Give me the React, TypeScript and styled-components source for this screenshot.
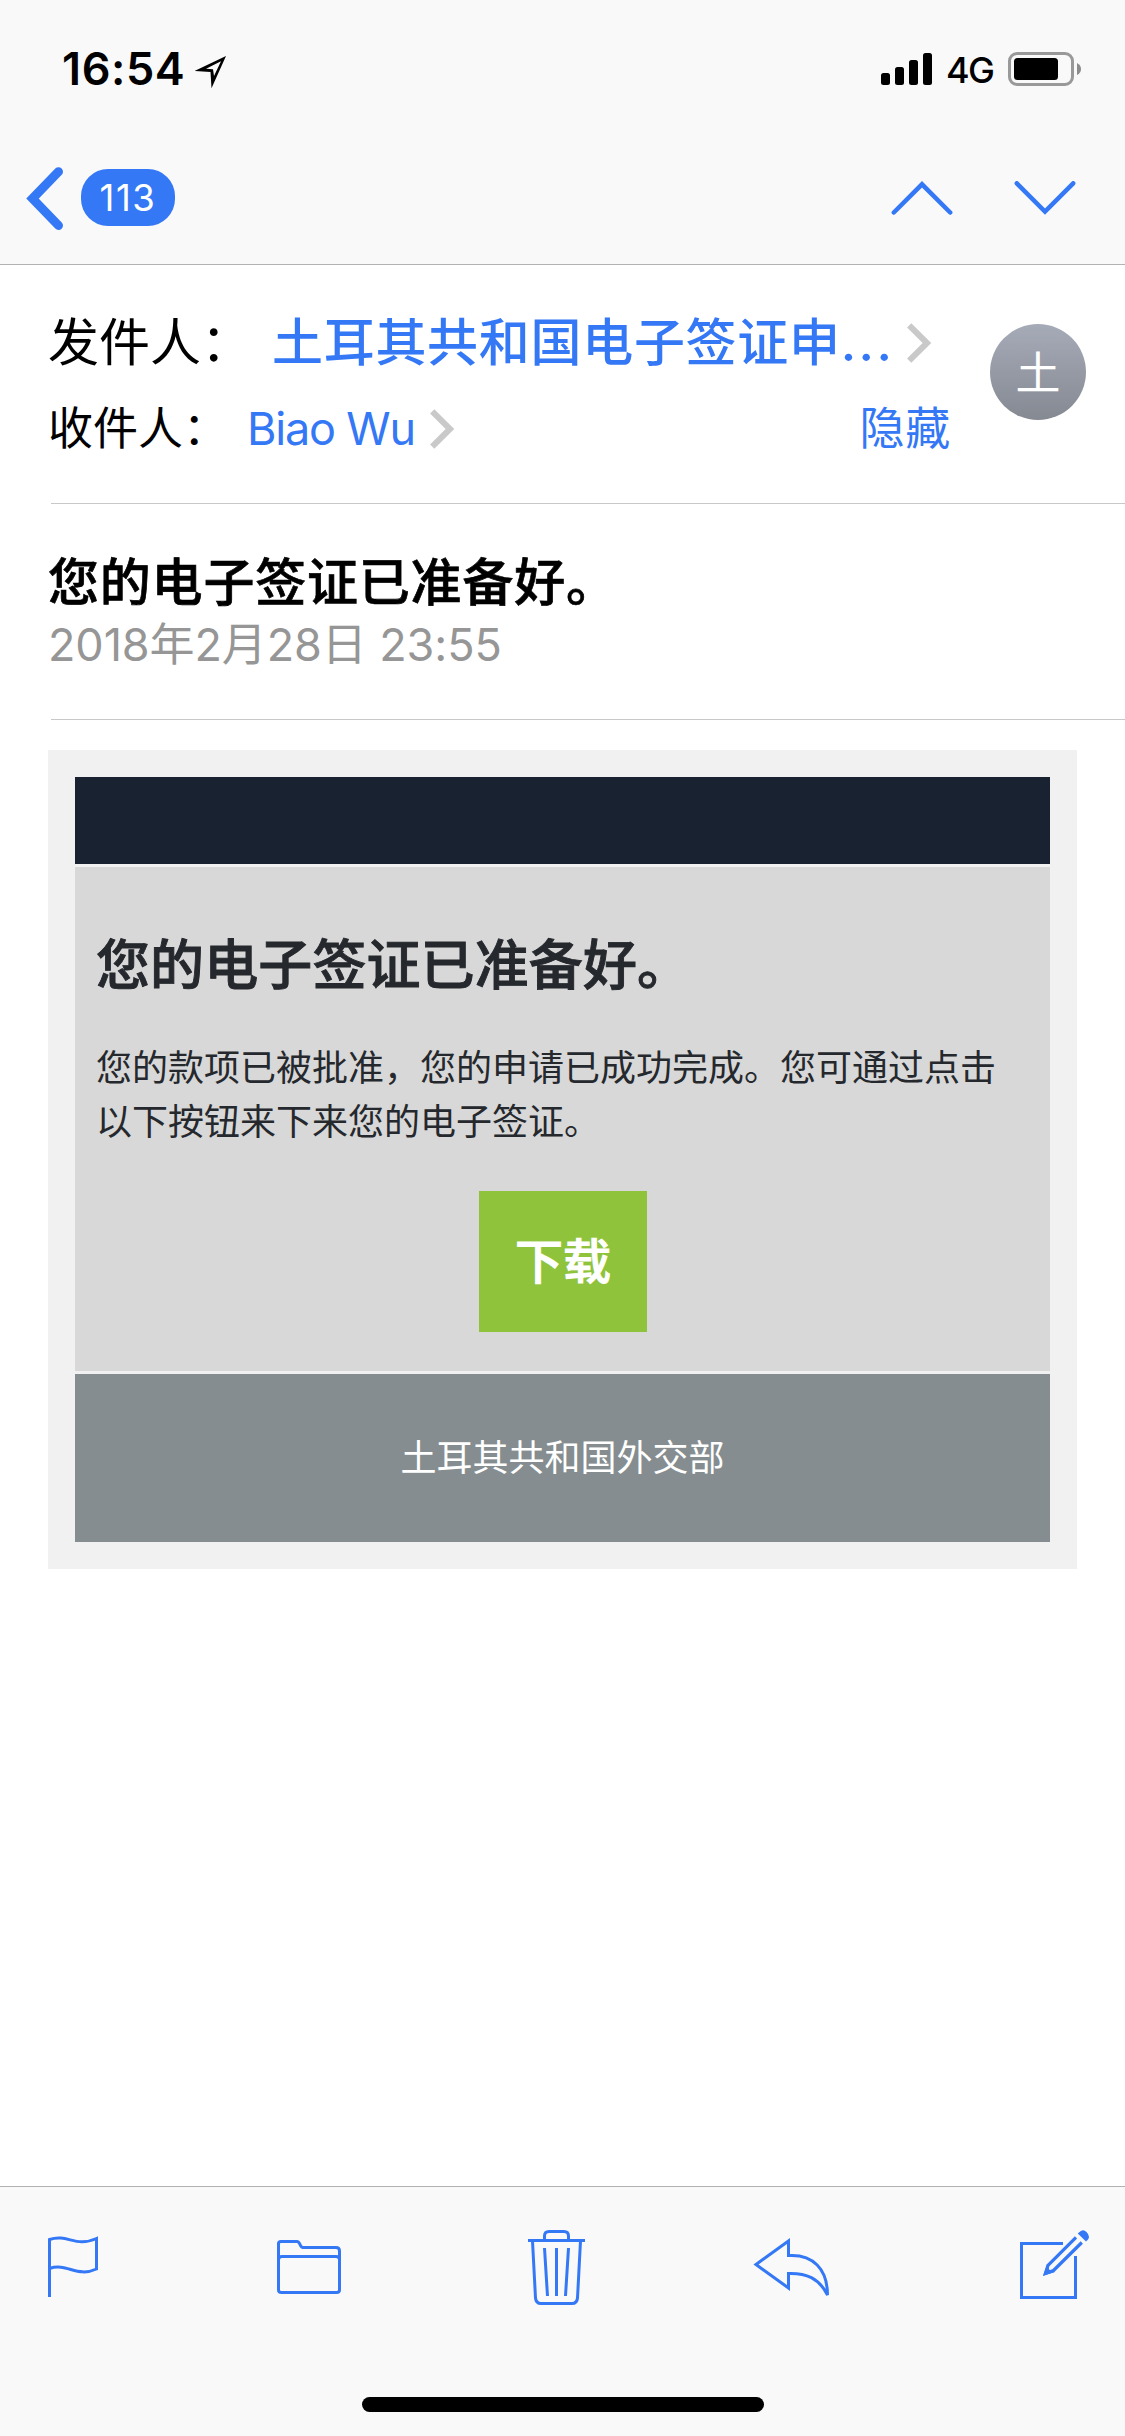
import React from "react";
import styled, { createGlobalStyle } from "styled-components";

const blue = "#3478f6";
const barFill = "#f9f9f9";
const sans = `Inter, "Noto Sans CJK SC", sans-serif`;

const GlobalStyle = createGlobalStyle`
  * { box-sizing: border-box; }
  body { margin: 0; background: #fff; }
`;

const Screen = styled.div`
  width: 1125px;
  height: 2436px;
  display: flex;
  flex-direction: column;
  background: #fff;
  font-family: ${sans};
  color: #000;
  overflow: hidden;
`;

const TopBar = styled.header`
  height: 265px;
  flex: none;
  background: ${barFill};
  border-bottom: 1px solid #b2b2b2;
`;

const StatusBar = styled.div`
  height: 132px;
  padding: 39px 44px 0 62px;
  display: flex;
  align-items: flex-start;
`;

const Clock = styled.span`
  width: 133px;
  font-size: 45px;
  line-height: 60px;
  font-weight: 600;
  letter-spacing: 0.6px;
  white-space: nowrap;
`;

const LocationIcon = styled.svg`
  margin-top: 16px;
`;

const Indicators = styled.div`
  margin-left: auto;
  display: flex;
  align-items: flex-start;
`;

const Signal = styled.div`
  display: flex;
  align-items: flex-end;
  gap: 5px;
  height: 32px;
  margin: 14px 14px 0 0;
`;

const SignalBar = styled.span<{ $height: number }>`
  width: 9px;
  height: ${(p) => p.$height}px;
  border-radius: 2.5px;
  background: #000;
`;

const Network = styled.span`
  width: 62px;
  font-size: 36px;
  line-height: 63px;
  font-weight: 450;
  letter-spacing: -1.6px;
`;

const Battery = styled.svg`
  margin-top: 13px;
`;

const NavBar = styled.nav`
  height: 132px;
  padding: 35px 49px 0 26px;
  display: flex;
  align-items: flex-start;
`;

const Unread = styled.span`
  margin: 2px 0 0 17px;
  width: 94px;
  height: 57px;
  border-radius: 27px;
  background: ${blue};
  color: #fff;
  font-size: 36.5px;
  line-height: 58px;
  letter-spacing: 1.6px;
  text-align: center;
`;

const Pager = styled.div`
  margin: 14px 0 0 auto;
  display: flex;
  gap: 61px;
`;

const MailHeader = styled.section`
  height: 239px;
  flex: none;
  display: flex;
  padding: 47px 39px 0 0;
  margin-left: 51px;
  border-bottom: 1px solid #c8c8c8;
`;

const Addresses = styled.div`
  width: 940px;
  margin-left: -3px;
`;

const AddressRow = styled.div<{ $large?: boolean }>`
  display: flex;
  align-items: center;
  height: ${(p) => (p.$large ? 61 : 54)}px;
  margin-bottom: ${(p) => (p.$large ? 29 : 0)}px;
  font-size: ${(p) => (p.$large ? 51 : 45)}px;
  line-height: ${(p) => (p.$large ? 61 : 54)}px;
  letter-spacing: 0.7px;
  white-space: nowrap;
`;

const Label = styled.span<{ $width: number }>`
  width: ${(p) => p.$width}px;
  letter-spacing: 0;
`;

const Sender = styled.span`
  width: 635px;
  color: ${blue};
  font-weight: 500;
`;

const Dots = styled.span`
  letter-spacing: 2.4px;
`;

const Recipient = styled.span`
  width: 183px;
  color: ${blue};
  letter-spacing: -1.2px;
`;

const HideButton = styled.button`
  margin: 0 37px 0 auto;
  padding: 0;
  border: 0;
  background: none;
  color: ${blue};
  font: inherit;
  letter-spacing: inherit;
`;

const Avatar = styled.div`
  width: 96px;
  height: 96px;
  margin: 12px 0 0 2px;
  border-radius: 50%;
  background: linear-gradient(#a6abb8, #858992);
  color: #fff;
  font-size: 45px;
  line-height: 99px;
  text-align: center;
`;

const Heading = styled.section`
  height: 216px;
  flex: none;
  margin-left: 51px;
  padding-top: 48px;
  border-bottom: 1px solid #c8c8c8;
`;

const Subject = styled.h1`
  margin: 0 0 5px -3px;
  font-size: 51px;
  line-height: 61px;
  font-weight: 500;
  letter-spacing: 0.8px;
  -webkit-text-stroke: 0.7px currentColor;
`;

const DateLine = styled.div`
  margin-left: -3px;
  color: #969696;
  font-size: 45px;
  line-height: 54px;
  letter-spacing: -0.1px;
`;

const Letter = styled.article`
  flex: none;
  width: 1029px;
  height: 819px;
  margin: 30px 0 0 48px;
  padding: 27px;
  display: flex;
  flex-direction: column;
  gap: 3px;
  background: #f1f1f1;
  font-family: "Noto Sans CJK SC", sans-serif;
`;

const Banner = styled.div`
  height: 87px;
  background: #192230;
`;

const Content = styled.div`
  height: 504px;
  padding: 63px 20px 0 21px;
  display: flex;
  flex-direction: column;
  background: #d8d8d8;
  color: #25282d;
`;

const Title = styled.h2`
  margin: 0;
  font-size: 54px;
  line-height: 64px;
  font-weight: 500;
  letter-spacing: 0.1px;
  -webkit-text-stroke: 0.9px currentColor;
`;

const Paragraph = styled.p`
  margin: 44px 0 0;
  font-size: 36px;
  line-height: 54px;
`;

const Download = styled.button`
  align-self: center;
  width: 168px;
  height: 141px;
  margin-top: 45px;
  padding: 0 0 6px;
  border: 0;
  background: #8fc33c;
  color: #fff;
  font: 500 48px/135px "Noto Sans CJK SC", sans-serif;
  -webkit-text-stroke: 1px currentColor;
`;

const Footer = styled.div`
  height: 168px;
  background: #858d90;
  color: #fff;
  font-size: 36px;
  line-height: 162px;
  text-align: center;
`;

const BottomBar = styled.footer`
  margin-top: auto;
  flex: none;
  height: 250px;
  display: flex;
  flex-direction: column;
  align-items: center;
  background: ${barFill};
  border-top: 1px solid #b2b2b2;
`;

const Tools = styled.div`
  width: 100%;
  height: 210px;
  padding: 42px 0 0 47px;
  display: grid;
  grid-template-columns: 229px 251px 226px 266px 1fr;
  align-items: start;
`;

const HomeIndicator = styled.div`
  width: 402px;
  height: 15px;
  border-radius: 8px;
  background: #000;
`;

const line = { fill: "none", stroke: blue, strokeWidth: 3 } as const;

const Disclosure = () => (
  <svg width="25" height="40" viewBox="0 0 25 40" fill="none" stroke="#c9c9c9" strokeWidth="6">
    <path d="M2.2 2.3 20 20 2.2 37.7" />
  </svg>
);

const FlagIcon = () => (
  <svg width="52" height="78" viewBox="0 0 52 78" {...line}>
    <path d="M2.5 68V10.5C21 4.500 28 19 49.500 9.500V40C30 49 20 33.500 2.500 39.500" />
  </svg>
);

const FolderIcon = () => (
  <svg width="66" height="78" viewBox="0 0 66 78" {...line}>
    <path d="M2.5 61V14.500Q2.500 12.500 5 12.500H21C24.500 12.500 23.500 18.500 27 18.500H60Q63.500 18.500 63.500 22V61Q63.500 63.500 60.500 63.500H5.500Q2.500 63.500 2.500 61Z" />
    <path d="M2.500 30.500Q2.500 27.500 6 27.500H60Q63.500 27.500 63.500 30.500" />
  </svg>
);

const TrashIcon = () => (
  <svg width="60" height="80" viewBox="0 0 60 80" {...line}>
    <path d="M1 11.500H58M17.500 11V7Q17.500 2.500 22 2.500H37Q41.500 2.500 41.500 7V11" />
    <path d="M5.500 12 8.500 69Q9 74.500 14 74.500H45Q50 74.500 50.500 69L53.500 12M17.500 19 20.500 67M29.500 19V67M41.500 19 38.500 67" />
  </svg>
);

const ReplyIcon = () => (
  <svg width="80" height="80" viewBox="0 0 80 80" {...line}>
    <path d="M3 35.500 35.500 12V26.500C60 25 74.500 40 74.500 66C66 49 53 44 35.500 44.500V59Z" />
  </svg>
);

const ComposeIcon = () => (
  <svg width="74" height="80" viewBox="0 0 74 80" {...line}>
    <path d="M44 14.500H2.500V68.500H56.500V27" />
    <path strokeWidth="3.200" d="M57 8.300 29 36.300 26.500 44.200 34.500 41.500 62.800 13.500" />
    <path fill={blue} stroke="none" d="M28 35.500 24 47 36 43 30.500 41Z" />
    <path fill={blue} stroke="none" d="M58.800 4.500 60.500 3Q64 -0.500 67.500 3Q71.500 7 69 10.500L67 12.500Z" />
  </svg>
);

export default function App() {
  return (
    <Screen>
      <GlobalStyle />
      <TopBar>
        <StatusBar>
          <Clock>16:54</Clock>
          <LocationIcon width="33" height="34" viewBox="0 0 33 34">
            <path fillRule="evenodd" d="M-0.300 16 31 1 16.500 33.300 15.500 17ZM11 13.800 18 14.200 19 21 26 6.300Z" />
          </LocationIcon>
          <Indicators>
            <Signal>
              {[12, 18, 25, 32].map((h) => (
                <SignalBar key={h} $height={h} />
              ))}
            </Signal>
            <Network>4G</Network>
            <Battery width="73" height="34" viewBox="0 0 73 34">
              <rect x="1.500" y="1.500" width="63" height="31" rx="7.500" fill="none" stroke="#999" strokeWidth="3" />
              <rect x="6" y="6" width="44" height="22" rx="3.500" />
              <path fill="#8c8c8c" d="M69 11Q73 13 73 17T69 23Z" />
            </Battery>
          </Indicators>
        </StatusBar>
        <NavBar>
          <svg width="38" height="64" viewBox="0 0 38 64" fill="none" stroke={blue} strokeWidth="9" strokeLinecap="round">
            <path d="M32.500 4.700 6.500 31.500 32.500 58.500" />
          </svg>
          <Unread>113</Unread>
          <Pager>
            <svg width="62" height="36" viewBox="0 0 62 36" fill="none" stroke={blue} strokeWidth="4.500" strokeLinecap="round">
              <path d="M2.800 31.500 31 3.300 59.200 31.500" />
            </svg>
            <svg width="62" height="36" viewBox="0 0 62 36" fill="none" stroke={blue} strokeWidth="4.500" strokeLinecap="round">
              <path d="M2.800 2.300 31 30.500 59.200 2.300" />
            </svg>
          </Pager>
        </NavBar>
      </TopBar>

      <MailHeader>
        <Addresses>
          <AddressRow $large>
            <Label $width={224}>发件人：</Label>
            <Sender>
              土耳其共和国电子签证申<Dots>...</Dots>
            </Sender>
            <Disclosure />
          </AddressRow>
          <AddressRow>
            <Label $width={199}>收件人：</Label>
            <Recipient>Biao Wu</Recipient>
            <Disclosure />
            <HideButton>隐藏</HideButton>
          </AddressRow>
        </Addresses>
        <Avatar>土</Avatar>
      </MailHeader>

      <Heading>
        <Subject>您的电子签证已准备好。</Subject>
        <DateLine>2018年2月28日 23:55</DateLine>
      </Heading>

      <Letter>
        <Banner />
        <Content>
          <Title>您的电子签证已准备好。</Title>
          <Paragraph>您的款项已被批准，您的申请已成功完成。您可通过点击以下按钮来下来您的电子签证。</Paragraph>
          <Download>下载</Download>
        </Content>
        <Footer>土耳其共和国外交部</Footer>
      </Letter>

      <BottomBar>
        <Tools>
          <FlagIcon />
          <FolderIcon />
          <TrashIcon />
          <ReplyIcon />
          <ComposeIcon />
        </Tools>
        <HomeIndicator />
      </BottomBar>
    </Screen>
  );
}
